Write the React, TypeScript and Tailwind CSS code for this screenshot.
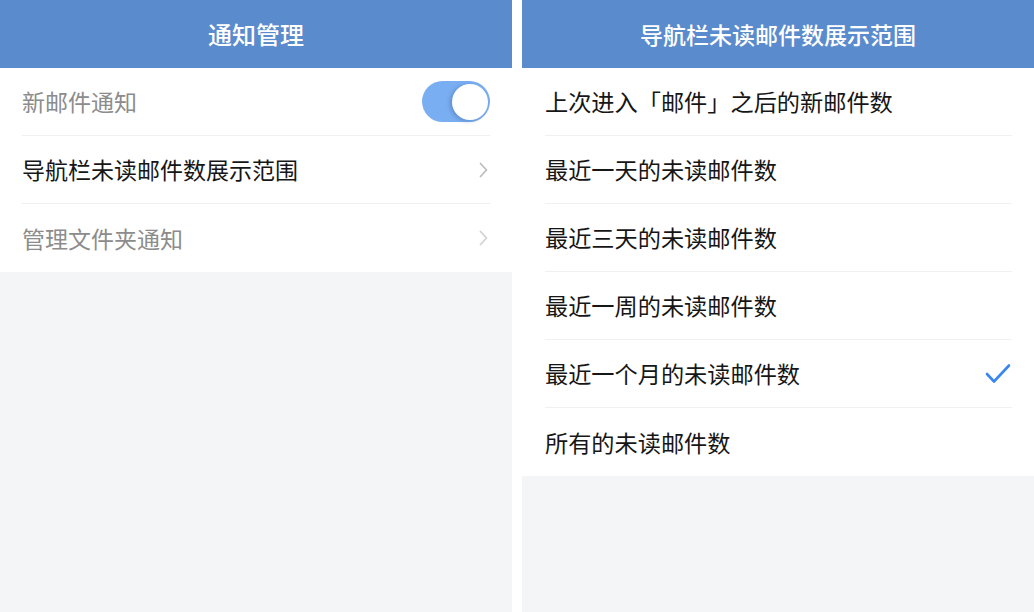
import React from "react";

const font = { fontFamily: '"Noto Sans CJK SC", "Noto Sans", sans-serif' };

const Chevron = ({ light }: { light?: boolean }) => (
  <svg width="9" height="16" viewBox="0 0 9 16" fill="none">
    <path
      d="M1.5 1.5L7.5 8L1.5 14.5"
      stroke={light ? "#d2d2d2" : "#bdbdbd"}
      strokeWidth="1.8"
      strokeLinecap="round"
      strokeLinejoin="round"
    />
  </svg>
);

const Check = () => (
  <svg width="28" height="22" viewBox="0 0 28 22" fill="none">
    <path
      d="M3 11L10 18.5L25 2.5"
      stroke="#3a86f0"
      strokeWidth="2.6"
      strokeLinecap="round"
      strokeLinejoin="round"
    />
  </svg>
);

const Toggle = () => (
  <div className="flex h-[41px] w-[68px] items-center justify-end rounded-full bg-[#7aaef2] pr-[2px]">
    <div className="h-[36px] w-[36px] rounded-full bg-white shadow-[-2px_1px_4px_rgba(40,80,140,0.35)]" />
  </div>
);

const Header = ({ title, big }: { title: string; big?: boolean }) => (
  <div
    className={`flex h-[68px] items-center justify-center bg-[#5a8bcd] font-medium text-white ${
      big ? "text-[24px]" : "text-[23px]"
    }`}
  >
    {title}
  </div>
);

const settings = [
  { label: "新邮件通知", muted: true, right: "toggle" },
  { label: "导航栏未读邮件数展示范围", muted: false, right: "chevron" },
  { label: "管理文件夹通知", muted: true, right: "chevron" },
];

const ranges = [
  "上次进入「邮件」之后的新邮件数",
  "最近一天的未读邮件数",
  "最近三天的未读邮件数",
  "最近一周的未读邮件数",
  "最近一个月的未读邮件数",
  "所有的未读邮件数",
];

export default function App() {
  return (
    <div className="flex h-[612px] w-[1034px] gap-[10px] bg-white" style={font}>
      <div className="flex w-[512px] flex-col bg-[#f4f5f7]">
        <Header title="通知管理" big />
        <div className="bg-white px-[22px]">
          {settings.map((s, i) => (
            <div
              key={s.label}
              className={`flex h-[68px] items-center justify-between ${
                i < settings.length - 1 ? "border-b border-[#f0f0f0]" : ""
              }`}
            >
              <span className={`text-[23px] ${s.muted ? "text-[#8c8c8c]" : "text-[#161616]"}`}>
                {s.label}
              </span>
              {s.right === "toggle" ? (
                <Toggle />
              ) : (
                <div className="pr-[2px]">
                  <Chevron light={s.muted} />
                </div>
              )}
            </div>
          ))}
        </div>
      </div>

      <div className="flex w-[512px] flex-col bg-[#f4f5f7]">
        <Header title="导航栏未读邮件数展示范围" />
        <div className="bg-white pl-[23px] pr-[22px]">
          {ranges.map((r, i) => (
            <div
              key={r}
              className={`flex h-[68px] items-center justify-between ${
                i < ranges.length - 1 ? "border-b border-[#f0f0f0]" : ""
              }`}
            >
              <span className="text-[23.2px] text-[#161616]">{r}</span>
              {i === 4 && <Check />}
            </div>
          ))}
        </div>
      </div>
    </div>
  );
}
